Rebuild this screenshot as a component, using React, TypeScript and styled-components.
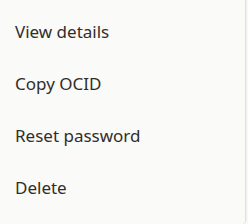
import styled, { createGlobalStyle } from 'styled-components';

const items = ['View details', 'Copy OCID', 'Reset password', 'Delete'];

const App: React.FC = () => {
  return (
    <>
      <GlobalStyle />
      <Menu role="menu">
        {items.map((label) => (
          <MenuItem key={label} role="menuitem">
            {label}
          </MenuItem>
        ))}
      </Menu>
    </>
  );
};

const GlobalStyle = createGlobalStyle`
  html, body {
    margin: 0;
    padding: 0;
    background: #fafaf8;
  }
`;

const Menu = styled.ul`
  list-style: none;
  margin: 0;
  padding: 5px 0 0;
  width: 246px;
  height: 224px;
  box-sizing: border-box;
  background: #fafaf8;
  border-right: 1px solid #e2e1df;
  border-bottom-right-radius: 4px;
  box-shadow: 1px 0 1px rgba(0, 0, 0, 0.04);
  font-family: 'Noto Sans', 'Open Sans', sans-serif;
`;

const MenuItem = styled.li`
  height: 52px;
  display: flex;
  align-items: center;
  padding: 0 15px;
  font-size: 17px;
  color: #312d2a;
  cursor: pointer;
`;

export default App;
